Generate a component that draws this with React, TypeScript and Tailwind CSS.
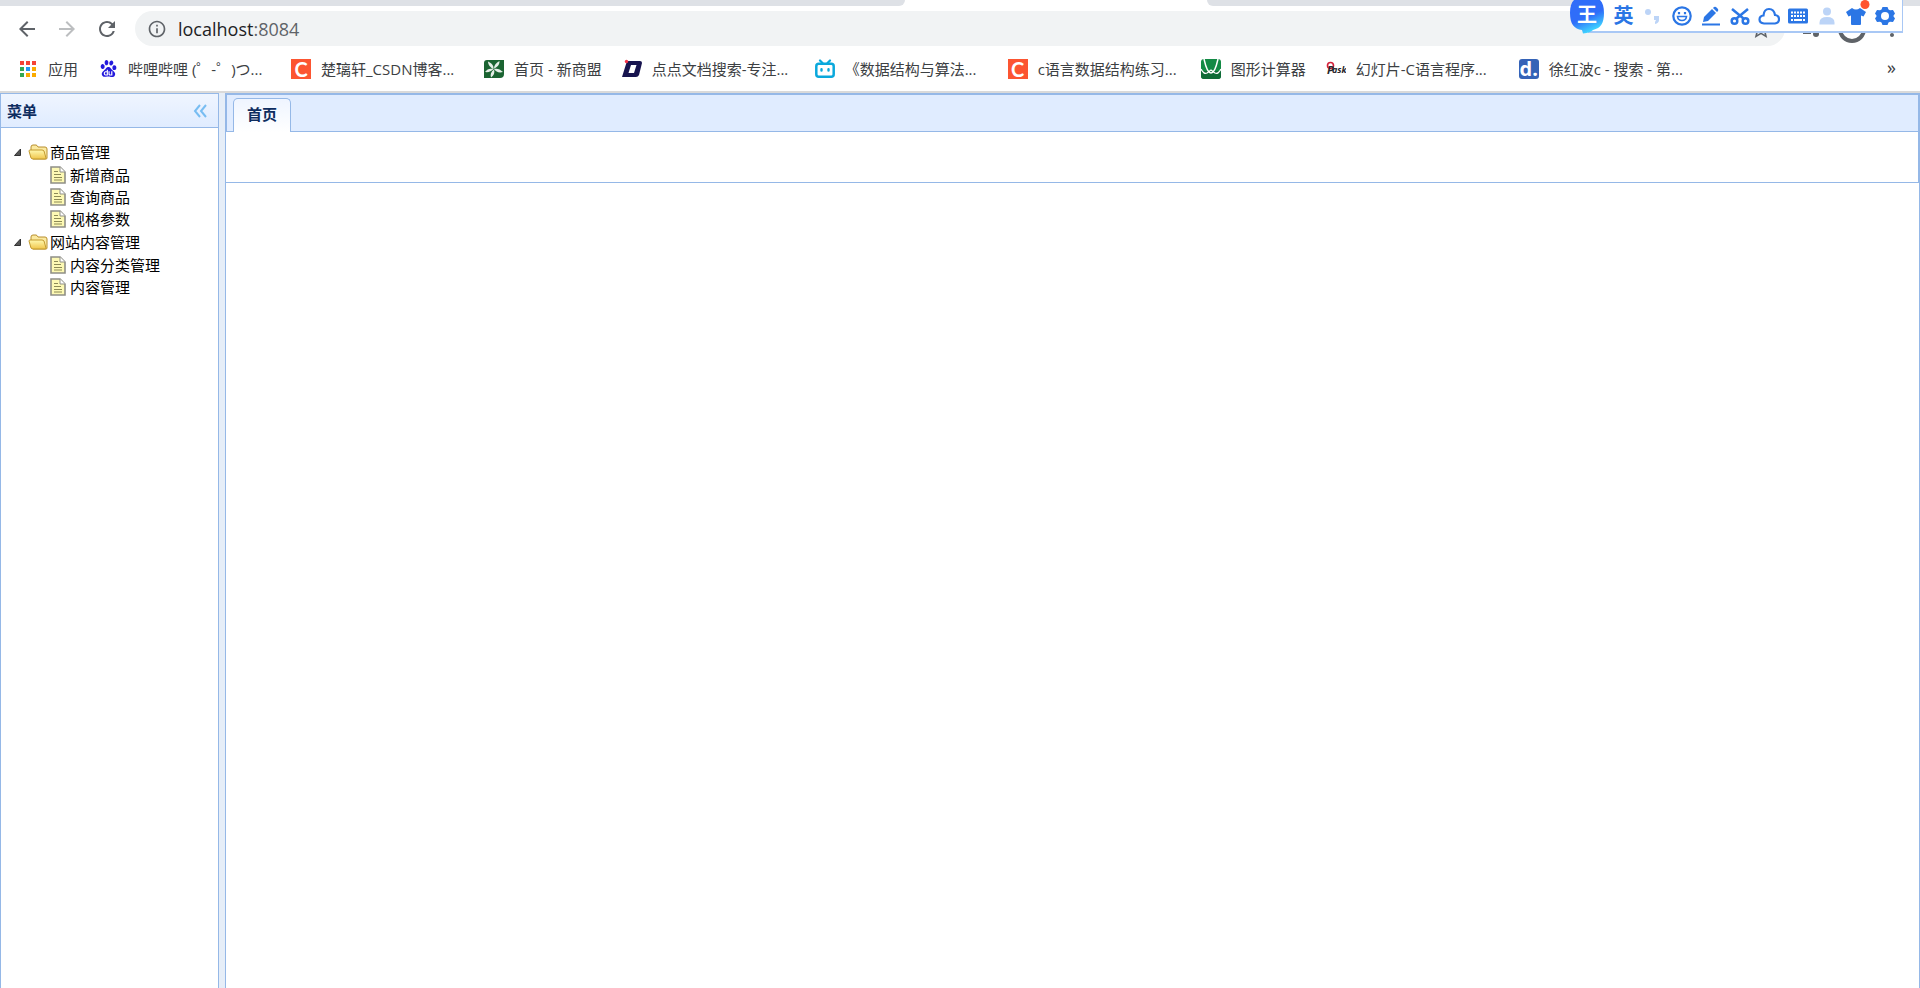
import { useState, type ReactNode } from "react";
import { SiBaidu } from "react-icons/si";
import {
  MdArrowBack,
  MdArrowForward,
  MdInfoOutline,
  MdMoreVert,
  MdRefresh,
  MdStarBorder,
} from "react-icons/md";

type TreeNode = {
  id: string;
  text: string;
  children: string[];
};

type Bookmark = {
  text: string;
  icon: ReactNode;
  clipped?: boolean;
};

const menu: TreeNode[] = [
  { id: "item", text: "商品管理", children: ["新增商品", "查询商品", "规格参数"] },
  { id: "content", text: "网站内容管理", children: ["内容分类管理", "内容管理"] },
];

function AppsIcon() {
  const colors = ["#f44336", "#f44336", "#f44336", "#34a853", "#2196f3", "#fbab00", "#34a853", "#fbab00", "#fbab00"];
  return (
    <svg viewBox="0 0 20 20" className="size-5" aria-hidden="true">
      {colors.map((fill, i) => (
        <rect key={i} x={2 + (i % 3) * 6} y={2 + Math.floor(i / 3) * 6} width="4" height="4" fill={fill} />
      ))}
    </svg>
  );
}

function CsdnIcon() {
  return (
    <span className="flex size-5 items-center justify-center bg-[#fc5531] font-[Lato,'Open_Sans',sans-serif] text-xl leading-5 font-bold text-white">
      C
    </span>
  );
}

function PinwheelIcon() {
  return (
    <svg viewBox="0 0 20 20" className="size-5" aria-hidden="true">
      <path d="M3 1h17v14a4 4 0 0 1-4 4H0V4a3 3 0 0 1 3-3z" fill="#1b6432" />
      <path
        d="M9.500 10C7 9 4 6 4 2.500 8 4 10 7 9.500 10zM10 9.500c0-3 2-6 5.500-7.500 0 4-2 6-5.500 7.500zM10 10c3-1 6 0 9 3-4 1-7 0-9-3zM10 10.500c1 3 0 6-3 8-1-3 0-6 3-8zM9.500 10c-2 2.500-5 3.500-8.500 3 2-3 5-4 8.500-3z"
        fill="#e6efe8"
      />
    </svg>
  );
}

function DocSearchIcon() {
  return (
    <svg viewBox="0 0 20 20" className="size-5" aria-hidden="true">
      <path d="M5 2h13q2 0 2 2l-3 12q-1 2-3 2H0z" fill="#17144f" />
      <path d="M9 6h5.500l-2.500 8H6.500z" fill="#fff" />
      <circle cx="4.500" cy="2.500" r="1.700" fill="#f5354a" />
    </svg>
  );
}

function TvIcon() {
  return (
    <svg viewBox="0 0 20 20" className="size-5" fill="none" stroke="#0aa8dc" strokeLinecap="round" aria-hidden="true">
      <path d="M5 1.500L7.500 4M15 1.500L12.500 4" strokeWidth="2.200" />
      <rect x="1.300" y="4.800" width="17.400" height="13" rx="2.500" strokeWidth="2.500" />
      <path d="M6.500 10.200v1.400M13.500 10.200v1.400" strokeWidth="2.400" />
    </svg>
  );
}

function GraphIcon() {
  return (
    <svg viewBox="0 0 20 20" className="size-5" fill="none" aria-hidden="true">
      <rect width="20" height="20" rx="3" fill="#138a45" />
      <path d="M0 12h20v5q0 3-3 3H3q-3 0-3-3z" fill="#0f6b37" />
      <path d="M3 0c2 9 4 14 7 14s5-5 7-14" stroke="#fff" strokeWidth="1.500" />
      <path d="M0 10c2 4 4 5 6 4l4-3 4 3c2 1 4 0 6-4" stroke="#fff" strokeWidth="1.300" />
    </svg>
  );
}

function PaskIcon() {
  return (
    <svg viewBox="0 0 20 20" className="size-5" aria-hidden="true">
      <circle cx="4.500" cy="6.500" r="3" fill="none" stroke="#d3203a" strokeWidth="1.600" />
      <text x="1" y="15" fontSize="11" fontWeight="700" fontStyle="italic" fontFamily="Open Sans, sans-serif" fill="#26262b">
        P
      </text>
      <text x="6" y="14" fontSize="9" fontWeight="700" fontStyle="italic" fontFamily="Open Sans, sans-serif" fill="#26262b">
        ask
      </text>
    </svg>
  );
}

function DocinIcon() {
  return (
    <span className="flex size-5 items-center justify-center rounded-[3px] bg-[#3563b7] font-['Open_Sans',sans-serif] text-xl leading-5 font-bold text-white">
      d.
    </span>
  );
}

const bookmarks: Bookmark[] = [
  { text: "应用", icon: <AppsIcon /> },
  { text: "哔哩哔哩 (゜-゜)つ...", icon: <SiBaidu className="size-[17px] text-[#2319dc]" />, clipped: true },
  { text: "楚璃轩_CSDN博客...", icon: <CsdnIcon />, clipped: true },
  { text: "首页 - 新商盟", icon: <PinwheelIcon /> },
  { text: "点点文档搜索-专注...", icon: <DocSearchIcon />, clipped: true },
  { text: "《数据结构与算法...", icon: <TvIcon />, clipped: true },
  { text: "c语言数据结构练习...", icon: <CsdnIcon />, clipped: true },
  { text: "图形计算器", icon: <GraphIcon /> },
  { text: "幻灯片-C语言程序...", icon: <PaskIcon />, clipped: true },
  { text: "徐红波c - 搜索 - 第...", icon: <DocinIcon />, clipped: true },
];

function FolderIcon() {
  return (
    <svg viewBox="0 0 20 18" className="h-[18px] w-5 shrink-0" aria-hidden="true">
      <defs>
        <linearGradient id="folder" x1="0" y1="0" x2="0" y2="1">
          <stop offset="0" stopColor="#fff9b0" />
          <stop offset="1" stopColor="#f0c54a" />
        </linearGradient>
      </defs>
      <path d="M3 7V4q0-2 2-2h3q1 0 2 2h7q2 0 2 2v9q0 1-1 1H5z" fill="#fbe9a0" stroke="#b88f2e" />
      <path d="M1 8q0-1 1-1h12q1 0 2 1l2 7q0 1-1 1H5q-1 0-2-1z" fill="url(#folder)" stroke="#c39a2f" />
    </svg>
  );
}

function FileIcon() {
  return (
    <svg viewBox="0 0 16 18" className="h-[18px] w-4 shrink-0" aria-hidden="true">
      <path d="M1 1h9l5 5v11H1z" fill="#fdf9b4" stroke="#8f8f86" strokeWidth="1.600" />
      <path d="M10 1v5h5" fill="#fff" stroke="#8f8f86" />
      <path d="M4 5.500h4M4 8.500h7M4 11.500h8M4 14h8" stroke="#8c8a55" />
    </svg>
  );
}

function ImeButton({ label, children }: { label: string; children: ReactNode }) {
  return (
    <button type="button" aria-label={label} className="flex h-[31px] w-[29px] items-center justify-center text-[#2b76e5]">
      {children}
    </button>
  );
}

function ImeBar() {
  return (
    <div className="absolute top-0 right-[17px] flex border-r border-b-2 border-[#a9c8f5] bg-white pr-[3px] pl-[21px]">
      <button
        type="button"
        aria-label="输入法"
        className="absolute top-0 -left-[18px] h-[34px] w-[34px] text-white"
      >
        <svg viewBox="0 4 34 34" className="absolute inset-0 size-full" aria-hidden="true">
          <defs>
            <linearGradient id="bubble" x1="0.300" y1="0" x2="0.700" y2="1">
              <stop offset="0.550" stopColor="#2f6df9" />
              <stop offset="0.900" stopColor="#3fd0ff" />
            </linearGradient>
          </defs>
          <path
            d="M17 0C29 0 34 5 34 17c0 10-3 15-11 17-2 2-5 3-10 3.500L12 34C4 33 0 28 0 17 0 5 5 0 17 0z"
            fill="url(#bubble)"
          />
        </svg>
        <span className="relative -mt-1 block text-xl leading-[30px] font-bold">王</span>
      </button>
      <ImeButton label="英文">
        <span className="text-xl leading-7 font-bold">英</span>
      </ImeButton>
      <ImeButton label="标点">
        <svg viewBox="0 0 20 20" className="size-5" aria-hidden="true">
          <circle cx="5" cy="6" r="3" fill="#bcd4f7" />
          <path d="M11 10h5v4q0 3-4 4v-2l1-2h-2z" fill="#bcd4f7" />
        </svg>
      </ImeButton>
      <ImeButton label="表情">
        <svg viewBox="0 0 20 20" className="size-5" fill="none" stroke="currentColor" strokeWidth="2.200" aria-hidden="true">
          <circle cx="10" cy="10" r="8.700" />
          <path d="M5.500 10.500q.5 4 4.500 4t4.500-4z" strokeWidth="1.600" />
          <path d="M7 6v2.200M13 6v2.200" />
        </svg>
      </ImeButton>
      <ImeButton label="手写">
        <svg viewBox="0 0 20 20" className="size-5" fill="currentColor" aria-hidden="true">
          <path d="M2 16l1-5 8-8 4 4-8 8zM12 2l1-1q1-.5 2 0l2 2q.5 1 0 2l-1 1zM1 17.500h18v2H1z" />
        </svg>
      </ImeButton>
      <ImeButton label="截图">
        <svg viewBox="0 0 20 20" className="size-5" fill="none" stroke="currentColor" strokeWidth="2.500" aria-hidden="true">
          <circle cx="4.500" cy="15" r="2.800" />
          <circle cx="15.500" cy="15" r="2.800" />
          <path d="M2 3l11.500 9.500M18 3L6.500 12.500" />
        </svg>
      </ImeButton>
      <ImeButton label="云端">
        <svg viewBox="0 0 22 20" className="h-5 w-[22px]" fill="none" stroke="currentColor" strokeWidth="2.200" aria-hidden="true">
          <path d="M6 17.500q-4.500-.5-4.500-4 0-3.500 4-4Q6 3 11 3t6 6q4 .5 4 4.300t-4 4.200z" />
        </svg>
      </ImeButton>
      <ImeButton label="键盘">
        <svg viewBox="0 0 20 16" className="h-4 w-5" aria-hidden="true">
          <rect width="20" height="15" y=".5" rx="1.500" fill="currentColor" />
          <path d="M3 4.500h14M3 8h14" stroke="#fff" strokeWidth="2" strokeDasharray="2 1" />
          <path d="M3 12h2M6 12h8M15 12h2" stroke="#fff" strokeWidth="2" />
        </svg>
      </ImeButton>
      <ImeButton label="账号">
        <svg viewBox="0 0 20 20" className="size-5" fill="#bcd4f7" aria-hidden="true">
          <circle cx="10" cy="5.500" r="4" />
          <path d="M2.500 18.500v-2q0-5.500 7.500-5.500t7.500 5.500v2z" />
        </svg>
      </ImeButton>
      <ImeButton label="皮肤">
        <svg viewBox="0 0 20 20" className="size-5 overflow-visible" aria-hidden="true">
          <path d="M6 2q4 3 8 0l6 4-2.500 4.500L15 9.500V18q0 1-1 1H6q-1 0-1-1V9.500l-2.500 1L0 6z" fill="currentColor" />
          <circle cx="19" cy="-1.500" r="4.500" fill="#ff5330" />
        </svg>
      </ImeButton>
      <ImeButton label="设置">
        <svg viewBox="0 0 20 20" className="size-5" aria-hidden="true">
          <path
            d="M7.500 1h5l1 2.500 1.500.8 3-.3 2 3.500L18.300 10l1.700 2.500-2 3.500-3-.3-1.500.8-1 2.500h-5l-1-2.500-1.500-.8-3 .3-2-3.500L1.700 10 0 7.500 2 4l3 .3 1.500-.8z"
            fill="currentColor"
          />
          <circle cx="10" cy="10" r="4" fill="#fff" />
        </svg>
      </ImeButton>
    </div>
  );
}

function BrowserBar() {
  return (
    <header className="relative border-b-2 border-[#dadada] bg-white text-[#3c4043]">
      <div className="flex h-[6px] bg-white">
        <div className="w-[905px] rounded-br-lg bg-[#dee1e6]" />
        <div className="ml-[302px] flex-1 rounded-bl-lg bg-[#dee1e6]" />
      </div>

      <div className="flex items-center pt-[5px] pl-[7px] text-[#5f6368]">
        <button type="button" aria-label="后退" className="flex w-10 justify-center">
          <MdArrowBack className="size-6" />
        </button>
        <button type="button" aria-label="前进" disabled className="flex w-10 justify-center text-[#bcbec0]">
          <MdArrowForward className="size-6" />
        </button>
        <button type="button" aria-label="重新加载" className="flex w-10 justify-center">
          <MdRefresh className="size-6" />
        </button>
        <div className="ml-2 flex h-[35px] flex-1 items-center rounded-full bg-[#f1f3f4] px-3">
          <MdInfoOutline className="size-5 shrink-0" />
          <p className="ml-[11px] flex-1 text-lg leading-6">
            <span className="text-[#202124]">localhost</span>:8084
          </p>
          <button type="button" aria-label="收藏">
            <MdStarBorder className="size-6" />
          </button>
        </div>
        <div className="flex w-[135px] items-center pl-[18px]">
          <button type="button" aria-label="媒体控制">
            <svg viewBox="0 0 18 20" className="h-5 w-[18px]" fill="currentColor" aria-hidden="true">
              <path d="M0 2h10v2H0zM0 8h10v2H0zM0 13h8v2H0zM12 2h5v3h-3v10h-2z" />
              <circle cx="13" cy="15" r="3" />
            </svg>
          </button>
          <button type="button" aria-label="用户" className="ml-[17px] size-7 rounded-full border-4 border-[#5f6368]" />
          <button type="button" aria-label="更多" className="ml-[14px]">
            <MdMoreVert className="size-6" />
          </button>
        </div>
      </div>

      <nav className="flex h-[45px] items-center gap-5 pl-[18px] text-[15px] leading-5">
        {bookmarks.map((mark) => (
          <a
            key={mark.text}
            href="#"
            className={`flex shrink-0 items-center gap-[10px] whitespace-nowrap ${mark.clipped ? "w-[173px]" : ""}`}
          >
            <span className="flex size-5 shrink-0 items-center justify-center">{mark.icon}</span>
            <span>{mark.text}</span>
          </a>
        ))}
        <button type="button" aria-label="更多书签" className="mr-[24px] mb-1 ml-auto text-lg leading-5">
          »
        </button>
      </nav>

      <ImeBar />
    </header>
  );
}

function MenuTree() {
  const [closed, setClosed] = useState<string[]>([]);

  const toggle = (id: string) =>
    setClosed((prev) => (prev.includes(id) ? prev.filter((x) => x !== id) : [...prev, id]));

  return (
    <ul className="px-[9px] py-3 text-[15px] text-black">
      {menu.map((node) => (
        <li key={node.id}>
          <button type="button" onClick={() => toggle(node.id)} className="flex h-6 items-center">
            <svg viewBox="0 0 18 18" className="size-[18px] shrink-0" aria-hidden="true">
              <path d="M10.500 6v6.500H4.500z" fill="#555" stroke="#333" />
            </svg>
            <FolderIcon />
            <span className="ml-[2px] leading-[22px]">{node.text}</span>
          </button>
          {!closed.includes(node.id) && (
            <ul className="pl-[40px]">
              {node.children.map((child) => (
                <li key={child}>
                  <a href="#" className="flex h-[22px] items-center gap-1">
                    <FileIcon />
                    <span className="leading-[22px]">{child}</span>
                  </a>
                </li>
              ))}
            </ul>
          )}
        </li>
      ))}
    </ul>
  );
}

export default function App() {
  return (
    <div className="flex min-h-screen flex-col bg-white font-['Open_Sans','Noto_Sans_CJK_SC',sans-serif]">
      <BrowserBar />

      <div className="flex flex-1 bg-[#e6eef8]">
        <aside className="w-[219px] shrink-0 border border-b-0 border-[#95b8e7] bg-white">
          <div className="flex h-[34px] items-center justify-between border-b border-[#95b8e7] bg-linear-to-b from-[#eff5ff] to-[#e0ecff] pr-[11px] pl-[6px]">
            <h2 className="text-[15px] leading-5 font-bold text-[#0e2d5f]">菜单</h2>
            <button type="button" aria-label="收起菜单">
              <svg viewBox="0 0 14 14" className="size-[14px]" fill="none" stroke="#78bdf2" strokeWidth="2" aria-hidden="true">
                <path d="M7 1L2 7l5 6M13 1L8 7l5 6" />
              </svg>
            </button>
          </div>
          <MenuTree />
        </aside>

        <main className="ml-[6px] flex-1 border border-b-0 border-[#95b8e7] bg-white">
          <div className="border-x border-t border-[#95b8e7] bg-[#e0ecff]">
            <div className="flex border-b border-[#95b8e7] pt-[3px] pl-[6px]" role="tablist">
              <button
                type="button"
                role="tab"
                aria-selected="true"
                className="-mb-px h-[34px] rounded-t-[5px] border border-b-0 border-[#95b8e7] bg-linear-to-b from-[#eff5ff] to-white px-[13px] pb-1 text-[15px] leading-5 font-bold text-[#0e2d5f]"
              >
                首页
              </button>
            </div>
          </div>
          <div className="h-[51px] border-r border-b border-[#95b8e7]" role="tabpanel" />
        </main>
      </div>
    </div>
  );
}
